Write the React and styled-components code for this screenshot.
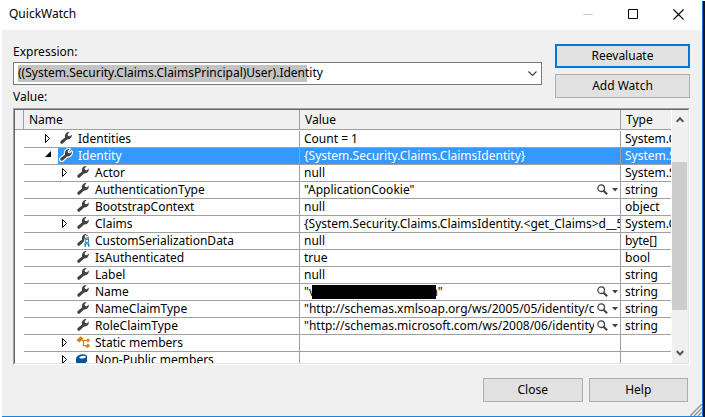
import React from "react";
import styled, { createGlobalStyle } from "styled-components";

const GlobalStyle = createGlobalStyle`
  * { box-sizing: border-box; }
  html, body { margin: 0; padding: 0; background: #fff; overflow: hidden; }
  body { font: 12px/16px "Noto Sans", "Open Sans", sans-serif; color: #000; }
  svg { display: block; flex: none; }
`;

const Screen = styled.div`
  display: flex;
  width: 705px;
  height: 417px;
`;
const Desktop = styled.div`
  width: 3px;
  margin-top: 1px;
  background: #111418;
  border-left: 1px solid #1a7ad0;
`;
const Window = styled.div`
  width: 702px;
  display: flex;
  flex-direction: column;
`;
const TitleBar = styled.div`
  height: 30px;
  display: flex;
  justify-content: space-between;
  padding: 6px 18px 0 9px;
`;
const Controls = styled.div`
  display: flex;
  gap: 34px;
  padding-top: 3px;
`;
const Client = styled.div`
  margin-left: 2px;
  height: 387px;
  padding: 14px 0 0 11px;
  background: #f0f0f0;
  border-bottom: 1px solid #1a82d8;
`;
const Top = styled.div`
  display: flex;
  gap: 13px;
  height: 64px;
`;
const Field = styled.div`
  width: 529px;
  display: flex;
  flex-direction: column;
`;
const Text = styled.span`
  white-space: pre;
  letter-spacing: ${(p) => p.$ls || 0}px;
`;
const Label = styled.div`
  height: 18px;
  line-height: 15px;
`;
const Combo = styled.div`
  height: 23px;
  display: flex;
  align-items: center;
  justify-content: space-between;
  padding: 0 4px;
  background: #fff;
  border: 1px solid #7a7a7a;
  margin-bottom: 4px;
`;
const Selection = styled.span`
  width: 289px;
  height: 17px;
  line-height: 16px;
  background: #c3c3c3;
`;
const ButtonColumn = styled.div`
  display: flex;
  flex-direction: column;
  gap: 6px;
`;
const Button = styled.button`
  width: ${(p) => p.$width}px;
  height: 24px;
  padding: 0 0 1px;
  font: inherit;
  line-height: 16px;
  color: #000;
  background: #e1e1e1;
  border: ${(p) => (p.$primary ? "2px solid #0078d7" : "1px solid #adadad")};
  border-radius: 0;
`;
const Grid = styled.div`
  display: flex;
  width: 677px;
  height: 257px;
  border: 1px solid;
  border-color: #a0a0a0 #fff #fff #a0a0a0;
`;
const GridInner = styled.div`
  display: flex;
  width: 675px;
  height: 255px;
  border: 1px solid;
  border-color: #696969 #e3e3e3 #e3e3e3 #696969;
  background: #fff;
`;
const Table = styled.div`
  width: 656px;
  margin-right: 1px;
  overflow: hidden;
`;
const Header = styled.div`
  display: grid;
  grid-template-columns: 9px 276px 321px 50px;
  height: 20px;
  margin-bottom: 1px;
  background: #f0f0f0;
  border-bottom: 1px solid #a0a0a0;
`;
const HeadCell = styled.div`
  padding: 2px 0 0 5px;
  line-height: 16px;
  border-right: ${(p) => (p.$last ? "none" : "1px solid #a0a0a0")};
`;
const Row = styled.div`
  display: grid;
  grid-template-columns: 276px 321px 50px;
  height: 17px;
  margin-left: 9px;
  line-height: 15px;
  color: ${(p) => (p.$selected ? "#fff" : "#000")};
  border-bottom: 1px solid #a0a0a0;
`;
const NameCell = styled.div`
  display: flex;
  padding-left: ${(p) => (p.$depth ? 36 : 19)}px;
  border-right: 1px solid #a0a0a0;
`;
const Toggle = styled.div`
  width: 15px;
  padding: 3px 0 0 2px;
`;
const NameBody = styled.div`
  flex: 1;
  display: flex;
  gap: 5px;
  padding-left: 1px;
  background: ${(p) => (p.$selected ? "#3399ff" : "transparent")};
`;
const ValueCell = styled.div`
  display: flex;
  position: relative;
  min-width: 0;
  padding-left: 4px;
  border-right: 1px solid #a0a0a0;
  background: ${(p) => (p.$selected ? "#3399ff" : "transparent")};
`;
const ValueText = styled.div`
  flex: 1;
  min-width: 0;
  overflow: hidden;
`;
const Lens = styled.div`
  display: flex;
  gap: 4px;
  width: 26px;
  padding: 2px 0 0 3px;
`;
const TypeCell = styled.div`
  padding-left: 4px;
  overflow: hidden;
  background: ${(p) => (p.$selected ? "#3399ff" : "transparent")};
`;
const Redaction = styled.div`
  position: absolute;
  left: 12px;
  top: 1px;
  width: 124px;
  height: 14px;
  background: #000;
`;
const ScrollBar = styled.div`
  width: 16px;
  display: flex;
  flex-direction: column;
  background: #f0f0f0;
`;
const Arrow = styled.div`
  height: ${(p) => (p.$down ? 13 : 52)}px;
  padding: ${(p) => (p.$down ? 0 : 6)}px 0 0 4px;
`;
const Thumb = styled.div`
  width: 15px;
  height: 150px;
  margin-bottom: 40px;
  background: #cdcdcd;
`;
const Footer = styled.div`
  display: flex;
  gap: 6px;
  height: 51px;
  padding: 13px 0 0 470px;
`;
const Grip = styled.div`
  align-self: flex-end;
  margin-left: -4px;
`;

const wrenchPath =
  "M1.2 9.6 5.6 6C5 3.4 6.6.8 9 .6L10 .7 8.1 2.7 8.6 4.4 10.4 4.8 12.2 3C12.8 5.8 10.4 8.4 7.6 7.9L3.2 12C1.8 13.3-.2 11.1 1.2 9.6Z";

const Wrench = ({ selected, pinned }) => (
  <svg width="14" height="15" viewBox="-0.5 -0.5 14 15">
    {selected && <path d={wrenchPath} fill="#fff" stroke="#fff" strokeWidth="2.4" strokeLinejoin="round" />}
    <path d={wrenchPath} fill="#424242" />
    {pinned && (
      <>
        <path d="M8 5h6v10H7V9Z" fill="#fff" />
        <path d="M9.5 2.2h2M9 4.5h2" stroke="#777" />
        <rect x="8.8" y="5.8" width="3.2" height="3" fill="#fff" stroke="#1683bd" />
        <path d="M8.6 13.2V10.4h3.6v2.8" fill="none" stroke="#1683bd" strokeWidth="1.4" />
      </>
    )}
  </svg>
);
const StaticIcon = () => (
  <svg width="14" height="15" viewBox="0 0 14 15">
    <path d="M.5 5 4.8 1.2 7.5 3.7 3.2 7.4ZM10 5.2l2-2 2 2-2 2.2ZM9.5 10.9l2.6-2.5 1.9 2.3-2.4 2.5Z" fill="#d08018" />
    <path d="M5.5 5.5H11M7.5 5.5v5.2h3" fill="none" stroke="#d08018" strokeWidth="1.2" />
  </svg>
);
const MembersIcon = () => (
  <svg width="14" height="15" viewBox="0 0 14 15">
    <path d="M0 6.5Q1 2.5 7 2.3q4 .2 4 2.5v4.4Q9 12.8 4 12.6 0 12 0 9.5Z" fill="#00539c" />
    <ellipse cx="6.6" cy="5.2" rx="3.3" ry="1.3" fill="#fff" transform="rotate(-6 6.6 5.2)" />
  </svg>
);
const Expander = ({ open }) =>
  open ? (
    <svg width="7" height="7"><path d="M6 0v6H0Z" fill="#000" /></svg>
  ) : (
    <svg width="6" height="9"><path d="M.5.5v8l4-4Z" fill="#fff" stroke="#000" /></svg>
  );
const Magnifier = () => (
  <svg width="11" height="12" viewBox="0 0 11 12">
    <circle cx="4.2" cy="4.2" r="3.3" fill="#fff" stroke="#424242" strokeWidth="1.3" />
    <path d="m6.6 6.8 3.5 3.5" stroke="#424242" strokeWidth="2" />
  </svg>
);
const DropArrow = () => (
  <svg width="6" height="12"><path d="M0 4h6L3 7.5Z" fill="#424242" /></svg>
);

const rows = [
  { name: "Identities", value: "Count = 1", type: "System.Collections", toggle: true, depth: 0 },
  { name: "Identity", value: "{System.Security.Claims.ClaimsIdentity}", type: "System.Security", toggle: true, open: true, depth: 0 },
  { name: "Actor", value: "null", type: "System.Security", toggle: true },
  { name: "AuthenticationType", value: '"ApplicationCookie"', type: "string", lens: true },
  { name: "BootstrapContext", value: "null", type: "object" },
  { name: "Claims", value: "{System.Security.Claims.ClaimsIdentity.<get_Claims>d__51}", type: "System.Collections", toggle: true },
  { name: "CustomSerializationData", value: "null", type: "byte[]", pinned: true },
  { name: "IsAuthenticated", value: "true", type: "bool" },
  { name: "Label", value: "null", type: "string" },
  { name: "Name", value: '"v                                     n"', type: "string", lens: true, redacted: true },
  { name: "NameClaimType", value: '"http://schemas.xmlsoap.org/ws/2005/05/identity/claims', type: "string", lens: true },
  { name: "RoleClaimType", value: '"http://schemas.microsoft.com/ws/2008/06/identity/cl', type: "string", lens: true },
  { name: "Static members", value: "", type: "", toggle: true, icon: "static" },
  { name: "Non-Public members", value: "", type: "", toggle: true, icon: "members" },
];

const RowIcon = ({ row }) => {
  if (row.icon === "static") return <StaticIcon />;
  if (row.icon === "members") return <MembersIcon />;
  return <Wrench selected={row.open} pinned={row.pinned} />;
};

const GridRow = ({ row }) => (
  <Row $selected={row.open}>
    <NameCell $depth={row.depth !== 0}>
      <Toggle>{row.toggle && <Expander open={row.open} />}</Toggle>
      <NameBody $selected={row.open}>
        <RowIcon row={row} />
        <Text $ls={row.nls}>{row.name}</Text>
      </NameBody>
    </NameCell>
    <ValueCell $selected={row.open}>
      <ValueText><Text $ls={row.vls}>{row.value}</Text></ValueText>
      {row.lens && <Lens><Magnifier /><DropArrow /></Lens>}
      {row.redacted && <Redaction />}
    </ValueCell>
    <TypeCell $selected={row.open}><Text>{row.type}</Text></TypeCell>
  </Row>
);

export default function App() {
  return (
    <>
      <GlobalStyle />
      <Screen>
        <Window>
          <TitleBar>
            <Text>QuickWatch</Text>
            <Controls>
              <svg width="11" height="11"><path d="M0 5.5h10" stroke="#ccc" /></svg>
              <svg width="11" height="11"><path d="M.5.5h9v9h-9Z" fill="none" stroke="#000" /></svg>
              <svg width="11" height="11"><path d="m.5.5 10 10m0-10-10 10" stroke="#000" strokeWidth="1.1" /></svg>
            </Controls>
          </TitleBar>
          <Client>
            <Top>
              <Field>
                <Label><Text>Expression:</Text></Label>
                <Combo>
                  <Selection><Text>((System.Security.Claims.ClaimsPrincipal)User).Identity</Text></Selection>
                  <svg width="9" height="6"><path d="m.5.5 4 4 4-4" fill="none" stroke="#444" strokeWidth="1.2" /></svg>
                </Combo>
                <Label><Text>Value:</Text></Label>
              </Field>
              <ButtonColumn>
                <Button $width={135} $primary><Text>Reevaluate</Text></Button>
                <Button $width={135}><Text>Add Watch</Text></Button>
              </ButtonColumn>
            </Top>
            <Grid>
              <GridInner>
                <Table>
                  <Header>
                    <HeadCell />
                    <HeadCell><Text>Name</Text></HeadCell>
                    <HeadCell><Text>Value</Text></HeadCell>
                    <HeadCell $last><Text>Type</Text></HeadCell>
                  </Header>
                  {rows.map((row) => <GridRow key={row.name} row={row} />)}
                </Table>
                <ScrollBar>
                  <Arrow><svg width="8" height="7"><path d="m.7 5.7 3.3-3.5 3.3 3.5" fill="none" stroke="#555" strokeWidth="2" /></svg></Arrow>
                  <Thumb />
                  <Arrow $down><svg width="8" height="7"><path d="m.7 1 3.3 3.5L7.3 1" fill="none" stroke="#555" strokeWidth="2" /></svg></Arrow>
                </ScrollBar>
              </GridInner>
            </Grid>
            <Footer>
              <Button $width={100}><Text>Close</Text></Button>
              <Button $width={100}><Text>Help</Text></Button>
              <Grip><svg width="12" height="12"><path d="M0 12 12 0M4 12l8-8M8 12l4-4" stroke="#999" strokeWidth="1.5" /></svg></Grip>
            </Footer>
          </Client>
        </Window>
        <Desktop />
      </Screen>
    </>
  );
}
